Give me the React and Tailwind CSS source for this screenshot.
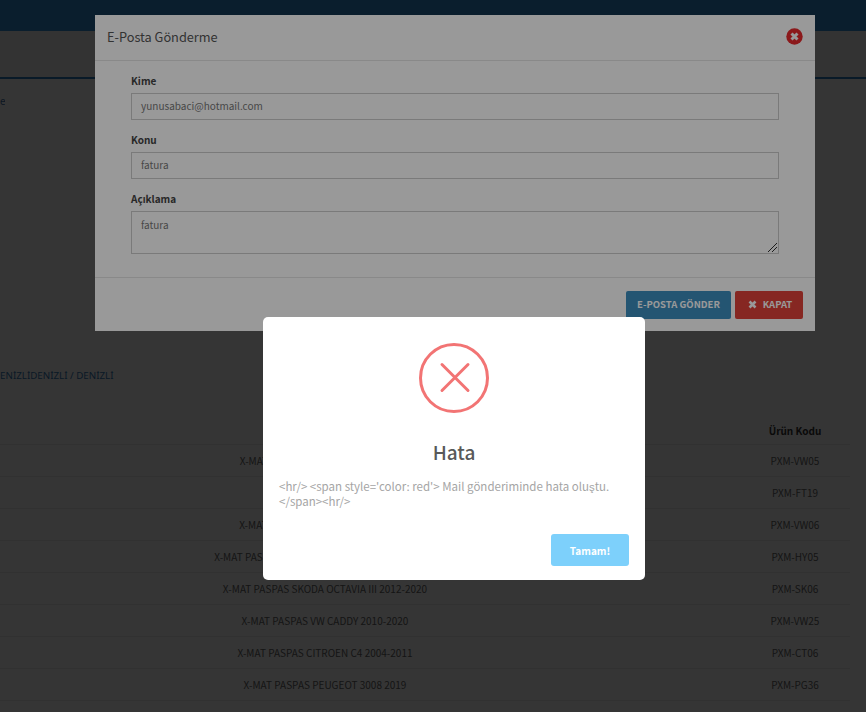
const rows = [
  ["X-MAT PASPAS VW PASSAT 2015-2020", "PXM-VW05"],
  ["X-MAT FIAT 500", "PXM-FT19"],
  ["X-MAT PASPAS VW TIGUAN 2016-2020", "PXM-VW06"],
  ["X-MAT PASPAS HYUNDAI SANTA FE XL 2012-2018", "PXM-HY05"],
  ["X-MAT PASPAS SKODA OCTAVIA III 2012-2020", "PXM-SK06"],
  ["X-MAT PASPAS VW CADDY 2010-2020", "PXM-VW25"],
  ["X-MAT PASPAS CITROEN C4 2004-2011", "PXM-CT06"],
  ["X-MAT PASPAS PEUGEOT 3008 2019", "PXM-PG36"],
];

function Field({ label, value, area }) {
  return (
    <div className="flex flex-col">
      <label className="text-[10px] leading-[16px] font-bold text-[#444] mb-[4px]">{label}</label>
      {area ? (
        <div className="relative h-[43px] border border-[#ccc] bg-white px-[9px] pt-[5px] text-[10px] leading-[15px] text-[#777]">
          {value}
          <svg className="absolute right-0 bottom-0" width="12" height="12" viewBox="0 0 12 12" stroke="#333" strokeWidth="1" fill="none">
            <path d="M2 11 L11 2 M6 11 L11 6" />
          </svg>
        </div>
      ) : (
        <div className="h-[27px] border border-[#ccc] bg-white px-[9px] pb-[2px] flex items-center text-[10px] text-[#777]">{value}</div>
      )}
    </div>
  );
}

export default function App() {
  return (
    <div className="relative w-[866px] h-[712px] overflow-hidden bg-white text-[#333] font-['Noto_Sans_CJK_SC',sans-serif]">
      <div className="h-[31px] bg-[#3493d6]" />
      <div className="h-[46px] bg-[#f4f4f4]" />
      <div className="h-[2px] bg-[#2f7fc0]" />
      <div className="h-[22px] pt-[14px] text-[10px] text-[#3a6ea5] leading-[16px] box-content">
        <span className="block w-[5px] overflow-hidden text-right">e</span>
      </div>
      <div className="mt-[253px] font-['Noto_Sans',sans-serif] text-[9.75px] leading-[16px] text-[#337ab7] h-[16px] -ml-[7px]">DENİZLİDENİZLİ / DENİZLİ</div>

      <div className="mt-[32px] grid grid-cols-[650px_90px_110px] text-[10px] text-[#666]">
        <div className="h-[29px] border-b border-[#eee]" />
        <div className="h-[29px] border-b border-[#eee]" />
        <div className="h-[29px] border-b border-[#eee] flex items-center justify-center font-bold text-[#333]">Ürün Kodu</div>
        {rows.map(([name, code]) => (
          <div key={code} className="contents">
            <div className="h-[32px] border-b border-[#eee] flex items-center justify-center">{name}</div>
            <div className="h-[32px] border-b border-[#eee]" />
            <div className="h-[32px] border-b border-[#eee] flex items-center justify-center">{code}</div>
          </div>
        ))}
      </div>

      {/* Bootstrap backdrop and form modal */}
      <div className="absolute inset-0 bg-black/65" />
      <div className="absolute left-[95px] top-[15px] w-[720px] h-[316px] bg-white flex flex-col">
        <div className="h-[46px] border-b border-[#e5e5e5] pl-[12px] pr-[12px] pb-[2px] flex items-center justify-between">
          <span className="text-[12.75px] text-[#555]">E-Posta Gönderme</span>
          <svg width="17" height="17" viewBox="0 0 17 17">
            <circle cx="8.5" cy="8.5" r="8.2" fill="#e82a2e" />
            <path d="M5.5 5.5 L11.5 11.5 M11.5 5.5 L5.5 11.5" stroke="#fff" strokeWidth="3" />
          </svg>
        </div>
        <div className="flex flex-col gap-[12px] pl-[36px] pr-[36px] pt-[12px] h-[217px] border-b border-[#e5e5e5]">
          <Field label="Kime" value="yunusabaci@hotmail.com" />
          <Field label="Konu" value="fatura" />
          <Field label="Açıklama" value="fatura" area />
        </div>
        <div className="flex justify-end gap-[4px] pr-[12px] pt-[13px]">
          <button className="w-[105px] h-[28px] pb-[2px] bg-[#3d8ebf] rounded-[2px] text-white text-[9.5px] font-bold">E-POSTA GÖNDER</button>
          <button className="w-[68px] h-[28px] pb-[2px] pl-[2px] bg-[#e0423a] rounded-[2px] text-white text-[9.5px] font-bold flex items-center justify-center gap-[6px]">
            <svg width="9" height="9" viewBox="0 0 9 9">
              <path d="M1.5 1.5 L7.5 7.5 M7.5 1.5 L1.5 7.5" stroke="#fff" strokeWidth="2.6" />
            </svg>
            KAPAT
          </button>
        </div>
      </div>

      {/* SweetAlert overlay and dialog */}
      <div className="absolute inset-0 bg-black/40" />
      <div className="absolute left-[263px] top-[317px] w-[382px] h-[263px] bg-white rounded-[5px] flex flex-col items-center">
        <svg className="mt-[26px]" width="70" height="70" viewBox="0 0 70 70" fill="none" stroke="#f27474">
          <circle cx="35" cy="35" r="33.5" strokeWidth="3" />
          <path d="M23 21.5 L49 47.5 M49 21.5 L23 47.5" strokeWidth="3" strokeLinecap="round" />
        </svg>
        <div className="mt-[25px] text-[19px] leading-[28px] font-medium text-[#595959]">Hata</div>
        <div className="mt-[13px] w-full px-[16px] text-[11.5px] leading-[15px] text-[#a5a5a5]">
          {"<hr/> <span style='color: red'> Mail gönderiminde hata oluştu."}<br />{"</span><hr/>"}
        </div>
        <div className="mt-[25px] w-full flex justify-end pr-[16px]">
          <button className="w-[78px] h-[32px] bg-[#7dd0fb] rounded-[3px] text-white text-[10px] font-bold">Tamam!</button>
        </div>
      </div>
    </div>
  );
}
